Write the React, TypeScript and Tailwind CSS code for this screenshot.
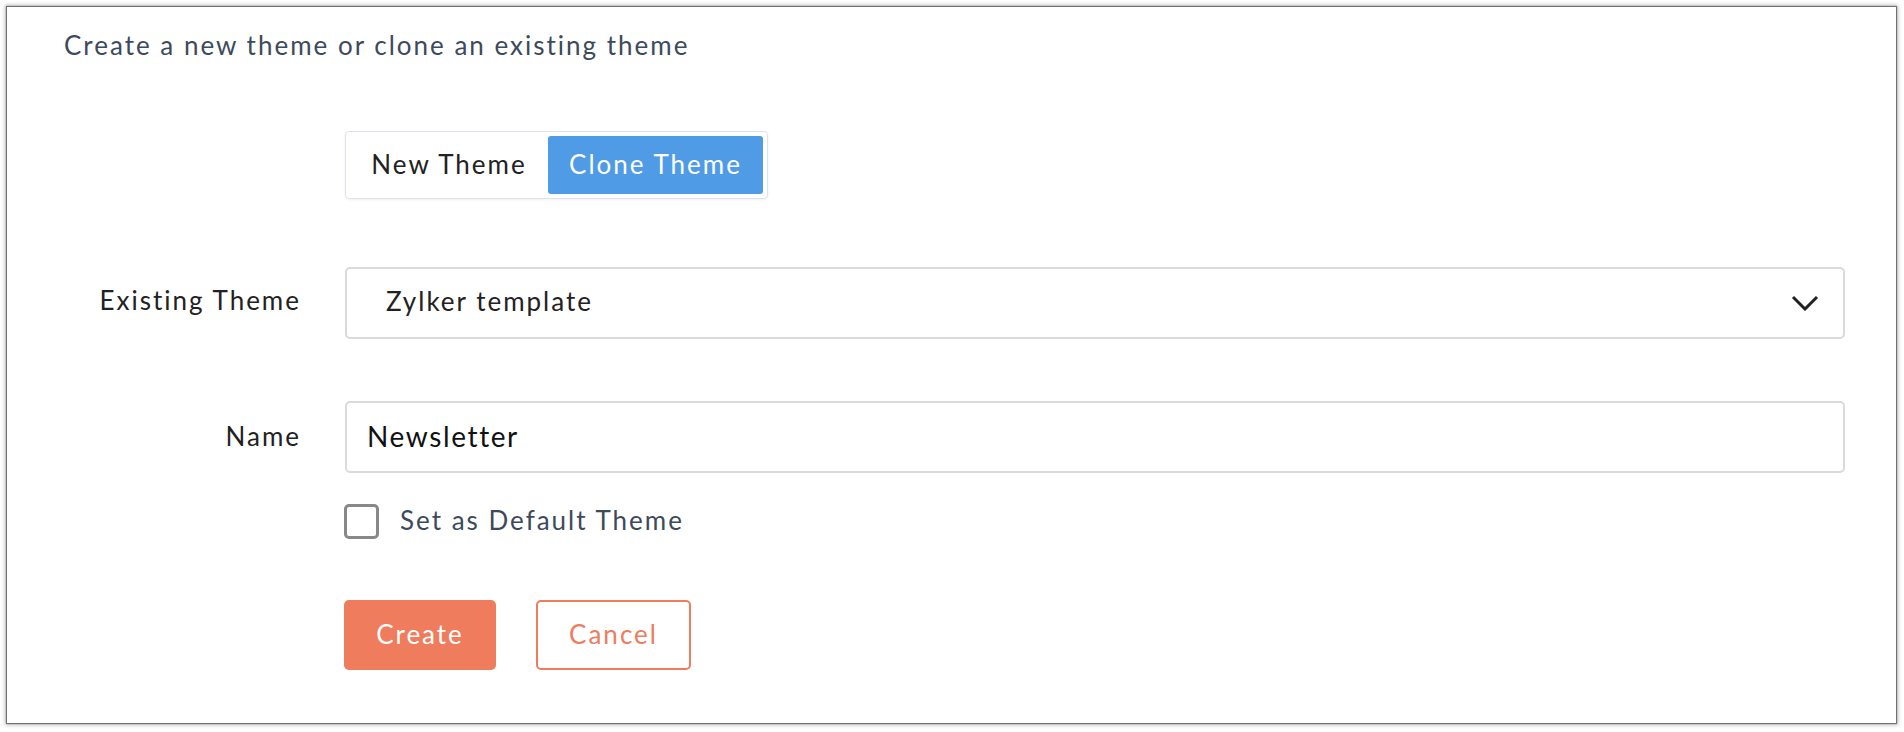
import React from "react";

export default function App() {
  const font = { fontFamily: "Lato, 'Noto Sans', sans-serif" };
  return (
    <div className="min-h-[732px] w-[1904px] bg-white pt-[7px] pl-[7px]" style={font}>
      <div className="w-[1889px] h-[716px] bg-white shadow-[0_0_1px_1px_rgba(0,0,0,0.45),0_0_4px_2px_rgba(0,0,0,0.25)] pt-[22px]">
        <h1 className="pl-[57px] text-[26px] leading-[32px] tracking-[2px] text-[#3d4a5c] font-normal">
          Create a new theme or clone an existing theme
        </h1>

        <div className="flex mt-[70px]">
          <div className="w-[294px] shrink-0" />
          <div className="ml-[44px] flex rounded-[4px] border border-[#dde3ec] p-[4px] shadow-[0_1px_3px_rgba(0,0,0,0.06)]">
            <button className="w-[198px] h-[58px] pb-[1px] text-[26px] tracking-[2px] text-[#222]">New Theme</button>
            <button className="w-[215px] h-[58px] pb-[1px] rounded-[3px] bg-[#4f9be6] text-[26px] tracking-[2px] text-white">
              Clone Theme
            </button>
          </div>
        </div>

        <div className="flex items-center mt-[68px] pr-[51px]">
          <div className="w-[294px] shrink-0 pb-[6px] text-right text-[26px] tracking-[2px] text-[#222]">Existing Theme</div>
          <div className="ml-[44px] flex-1 h-[72px] rounded-[5px] border-2 border-[#dadada] flex items-center justify-between pl-[39px] pr-[24px]">
            <span className="pb-[3px] text-[26px] tracking-[2px] text-[#222]">Zylker template</span>
            <svg width="28" height="16" viewBox="0 0 28 16" fill="none">
              <polyline points="2,2 14,14 26,2" stroke="#222" strokeWidth="3" />
            </svg>
          </div>
        </div>

        <div className="flex items-center mt-[62px] pr-[51px]">
          <div className="w-[294px] shrink-0 pb-[2px] text-right text-[26px] tracking-[2px] text-[#222]">Name</div>
          <div className="ml-[44px] flex-1 h-[72px] rounded-[5px] border-2 border-[#dadada] flex items-center pl-[20px]">
            <span className="pb-[3px] text-[28px] tracking-[1.6px] text-[#111]">Newsletter</span>
          </div>
        </div>

        <div className="flex items-center mt-[31px] h-[35px]">
          <div className="w-[294px] shrink-0" />
          <div className="ml-[43px] flex items-center h-[35px]">
            <div className="w-[35px] h-[35px] rounded-[5px] border-[3px] border-[#888888] bg-white" />
            <span className="ml-[21px] pb-[4px] text-[26px] leading-[30px] tracking-[2px] text-[#3d4a5c]">Set as Default Theme</span>
          </div>
        </div>

        <div className="flex mt-[61px]">
          <div className="w-[294px] shrink-0" />
          <div className="ml-[43px] flex gap-[40px]">
            <button className="w-[152px] h-[70px] pb-[1px] rounded-[5px] bg-[#ee7c5d] text-white text-[26px] tracking-[2px]">
              Create
            </button>
            <button className="w-[155px] h-[70px] pb-[1px] rounded-[5px] border-2 border-[#ee7c5d] bg-white text-[#ee7c5d] text-[26px] tracking-[2px]">
              Cancel
            </button>
          </div>
        </div>
      </div>
    </div>
  );
}
